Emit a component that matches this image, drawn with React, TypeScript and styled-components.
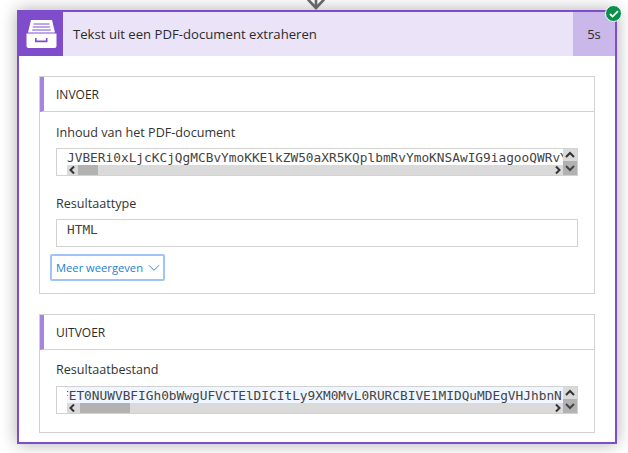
import React from 'react';
import styled, { createGlobalStyle } from 'styled-components';

const Global = createGlobalStyle`
  html, body { margin: 0; padding: 0; background: #fff; overflow: hidden; }
  #root { width: 628px; height: 453px; overflow: hidden; }
  * { box-sizing: border-box; }
`;

const Page = styled.div`
  position: relative;
  width: 628px;
  height: 453px;
  padding: 10px 11px 0 17px;
  font-family: "Open Sans", "Noto Sans", sans-serif;
  color: #2b2b2b;
`;

const Connector = styled.svg`
  position: absolute;
  left: 305px;
  top: 0;
  z-index: 2;
`;

const Card = styled.section`
  position: relative;
  width: 600px;
  height: 434px;
  border: 2px solid #7f4dcb;
  background: #fff;
  box-shadow: 0 0 16px rgba(0, 0, 0, 0.32);
`;

const Badge = styled.div`
  position: absolute;
  top: -7px;
  right: -7px;
  width: 17px;
  height: 17px;
  border-radius: 50%;
  background: #0b8f4b;
  border: 1px solid #fff;
  display: flex;
  align-items: center;
  justify-content: center;
`;

const CardHeader = styled.header`
  display: flex;
  align-items: stretch;
  height: 44px;
  background: #ebe3f8;
`;

const IconBlock = styled.div`
  width: 44px;
  background: #7f4dcb;
  display: flex;
  align-items: center;
  justify-content: center;
`;

const Title = styled.div`
  flex: 1;
  display: flex;
  align-items: center;
  padding-left: 10px;
  font-size: 13.15px;
`;

const Duration = styled.div`
  width: 42px;
  background: #cbb8ea;
  display: flex;
  align-items: center;
  justify-content: center;
  font-size: 13px;
`;

const Body = styled.div`
  display: flex;
  flex-direction: column;
  gap: 20px;
  padding: 20px 20px 0;
`;

const Panel = styled.div<{ $height: number }>`
  height: ${p => p.$height}px;
  width: 556px;
  border: 1px solid #d2d2d2;
`;

const PanelHeader = styled.div`
  height: 35px;
  display: flex;
  align-items: center;
  padding-left: 12px;
  border-left: 4px solid #a684e0;
  border-bottom: 1px solid #d2d2d2;
  font-size: 12px;
`;

const PanelBody = styled.div<{ $top: number }>`
  padding: ${p => p.$top}px 16px 0;
`;

const Label = styled.div<{ $gap: number }>`
  font-size: 12.6px;
  line-height: 17px;
  height: 17px;
  margin-bottom: ${p => p.$gap}px;
  color: #333;
`;

const Field = styled.div<{ $gap?: number }>`
  display: grid;
  grid-template-columns: 1fr 14px;
  width: 522px;
  height: 28px;
  margin-bottom: ${p => p.$gap ?? 0}px;
  border: 1px solid #d2d2d2;
  background: #fff;
`;

const TextColumn = styled.div`
  min-width: 0;
  padding-left: 10px;
  display: flex;
  flex-direction: column;
`;

const MonoText = styled.div<{ $tint?: boolean }>`
  height: 16px;
  line-height: 17px;
  overflow: hidden;
  white-space: nowrap;
  font-family: "DejaVu Sans Mono", "Liberation Mono", monospace;
  font-size: 12.8px;
  color: #444;
  background: ${p => (p.$tint ? '#f0f6ff' : 'transparent')};
`;

const MonoInner = styled.span<{ $shift: number }>`
  display: inline-block;
  margin-left: ${p => p.$shift}px;
`;

const HScroll = styled.div`
  height: 10px;
  background: #dadada;
  display: flex;
  align-items: center;
  justify-content: space-between;
  position: relative;
`;

const HThumb = styled.div<{ $left: number; $width: number }>`
  position: absolute;
  top: 0;
  bottom: 0;
  left: ${p => p.$left}px;
  width: ${p => p.$width}px;
  background: #b2b2b2;
`;

const VScroll = styled.div`
  display: flex;
  flex-direction: column;
  background: #dadada;
`;

const VArrowUp = styled.div`
  height: 12px;
  display: flex;
  align-items: center;
  justify-content: center;
`;

const VThumb = styled.div`
  flex: 1;
  background: #b2b2b2;
  display: flex;
  align-items: center;
  justify-content: center;
`;

const PlainField = styled.div`
  width: 522px;
  height: 28px;
  border: 1px solid #d2d2d2;
  padding-left: 10px;
  font-family: "DejaVu Sans Mono", "Liberation Mono", monospace;
  font-size: 12.8px;
  line-height: 20px;
  color: #444;
`;

const MoreButton = styled.button`
  display: flex;
  align-items: center;
  gap: 5px;
  width: 115px;
  height: 27px;
  margin: 7px 0 0 -6px;
  padding: 0 0 0 4px;
  border: 2px solid #a0c4fa;
  border-radius: 2px;
  background: #fff;
  font-family: inherit;
  font-size: 11.2px;
  white-space: nowrap;
  color: #1f7fd1;
`;

const Chev = ({ d, color = '#333' }: { d: string; color?: string }) => (
  <svg width="12" height="10" viewBox="0 0 12 10" fill="none">
    <path d={d} stroke={color} strokeWidth="2" />
  </svg>
);

const ScrollField = ({ text, shift = 0, left, width, tint, gap }: { text: string; shift?: number; left: number; width: number; tint?: boolean; gap?: number }) => (
  <Field $gap={gap}>
    <TextColumn>
      <MonoText $tint={tint}><MonoInner $shift={shift}>{text}</MonoInner></MonoText>
      <HScroll>
        <HThumb $left={left} $width={width} />
        <Chev d="M7 1.5 3.5 5 7 8.5" />
        <Chev d="M5 1.5 8.5 5 5 8.5" />
      </HScroll>
    </TextColumn>
    <VScroll>
      <VArrowUp><Chev d="M2 7 6 3 10 7" /></VArrowUp>
      <VThumb><Chev d="M2 3 6 7 10 3" color="#444" /></VThumb>
    </VScroll>
  </Field>
);

export default function App() {
  return (
    <Page>
      <Global />
      <Connector width="22" height="10" viewBox="0 0 22 10" fill="none">
        <path d="M11 0v9M3 -0.5 11 8l8-8.5" stroke="#666" strokeWidth="2.6" />
      </Connector>
      <Card>
        <Badge>
          <svg width="10" height="8" viewBox="0 0 10 8" fill="none">
            <path d="M1 4l2.6 2.6L9 1.2" stroke="#fff" strokeWidth="1.8" />
          </svg>
        </Badge>
        <CardHeader>
          <IconBlock>
            <svg width="31" height="28" viewBox="0 0 31 28" fill="#fff">
              <path d="M5 0h21l3 12.4H2z" />
              <path d="M7.5 4h16M6.8 7h17.4M6.2 10h18.6" stroke="#7f4dcb" strokeWidth="1" />
              <path fillRule="evenodd" d="M0.5 13.4h30V26a2 2 0 0 1-2 2h-26a2 2 0 0 1-2-2zM9 18v4.2h12.5V18h-1.6v2.6h-9.3V18z" />
            </svg>
          </IconBlock>
          <Title>Tekst uit een PDF-document extraheren</Title>
          <Duration>5s</Duration>
        </CardHeader>
        <Body>
          <Panel $height={218}>
            <PanelHeader>INVOER</PanelHeader>
            <PanelBody $top={12}>
              <Label $gap={7}>Inhoud van het PDF-document</Label>
              <ScrollField text="JVBERi0xLjcKCjQgMCBvYmoKKElkZW50aXR5KQplbmRvYmoKNSAwIG9iagooQWRvYmU" left={11} width={20} gap={19} />
              <Label $gap={7}>Resultaattype</Label>
              <PlainField>HTML</PlainField>
              <MoreButton>
                Meer weergeven
                <svg width="12" height="8" viewBox="0 0 13 8" fill="none">
                  <path d="M1 1l5.5 5.5L12 1" stroke="#1f7fd1" />
                </svg>
              </MoreButton>
            </PanelBody>
          </Panel>
          <Panel $height={119}>
            <PanelHeader>UITVOER</PanelHeader>
            <PanelBody $top={11}>
              <Label $gap={8}>Resultaatbestand</Label>
              <ScrollField text="FET0NUWVBFIGh0bWwgUFVCTElDICItLy9XM0MvL0RURCBIVE1MIDQuMDEgVHJhbnN" shift={-6} left={13} width={50} tint />
            </PanelBody>
          </Panel>
        </Body>
      </Card>
    </Page>
  );
}
